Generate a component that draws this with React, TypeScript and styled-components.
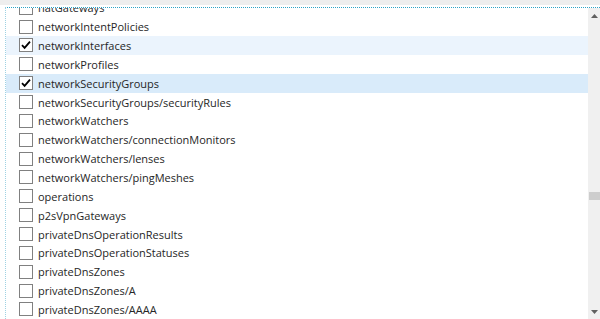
import React from 'react';
import styled, { createGlobalStyle } from 'styled-components';

// types
type Item = {
    label: string;
    checked?: boolean;
    tone?: 'hover' | 'selected';
};

const items: Item[] = [
    { label: 'natGateways' },
    { label: 'networkIntentPolicies' },
    { label: 'networkInterfaces', checked: true, tone: 'hover' },
    { label: 'networkProfiles' },
    { label: 'networkSecurityGroups', checked: true, tone: 'selected' },
    { label: 'networkSecurityGroups/securityRules' },
    { label: 'networkWatchers' },
    { label: 'networkWatchers/connectionMonitors' },
    { label: 'networkWatchers/lenses' },
    { label: 'networkWatchers/pingMeshes' },
    { label: 'operations' },
    { label: 'p2sVpnGateways' },
    { label: 'privateDnsOperationResults' },
    { label: 'privateDnsOperationStatuses' },
    { label: 'privateDnsZones' },
    { label: 'privateDnsZones/A' },
    { label: 'privateDnsZones/AAAA' }
];

const GlobalStyle = createGlobalStyle`
    html, body {
        margin: 0;
        padding: 0;
        background: #ffffff;
    }
`;

// local components
const Page = styled.div`
    width: 600px;
    height: 319px;
    display: flex;
    flex-direction: column;
    overflow: hidden;
    font-family: 'Open Sans', 'Noto Sans', sans-serif;
`;

const TopBand = styled.div`
    height: 5px;
    background: #eeeeee;
    margin-bottom: 2px;
`;

const Frame = styled.div`
    flex: 1;
    min-height: 0;
    margin-left: 5px;
    display: flex;
    border-top: 1px dotted #2ea4c7;
    border-left: 1px dotted #9fd2e3;
`;

const List = styled.div`
    flex: 1;
    min-width: 0;
    overflow: hidden;
`;

const Rows = styled.div`
    margin-top: -9.7px;
`;

const Row = styled.div<{ $tone?: 'hover' | 'selected' }>`
    height: 18.87px;
    display: flex;
    align-items: center;
    padding-left: 13px;
    gap: 5px;
    background: ${p =>
        p.$tone === 'selected' ? '#d9ebfa' : p.$tone === 'hover' ? '#ebf4fd' : 'transparent'};
`;

const Box = styled.div`
    width: 12px;
    height: 12px;
    border: 1px solid #808080;
    background: #ffffff;
    display: flex;
    align-items: center;
    justify-content: center;
    flex: none;
`;

const Label = styled.span`
    font-size: 11px;
    color: #262626;
    white-space: nowrap;
`;

const Scrollbar = styled.div`
    width: 12px;
    flex: none;
    background: #f0f0f0;
    display: flex;
    flex-direction: column;
    align-items: center;
    justify-content: space-between;
    padding: 6px 0 5px;
    box-sizing: border-box;
    position: relative;
`;

const Thumb = styled.div`
    position: absolute;
    left: 1px;
    right: 0;
    top: 184px;
    height: 8px;
    background: #cdcdcd;
`;

const Check = () => (
    <svg width="12" height="12" viewBox="0 0 12 12">
        <path d="M2 6.2 L4.6 8.9 L10 2.6" fill="none" stroke="#000" strokeWidth="1.8" />
    </svg>
);

const Arrow = ({ down }: { down?: boolean }) => (
    <svg width="7" height="4" viewBox="0 0 7 4">
        <path d={down ? 'M0 0 H7 L3.5 4 Z' : 'M0 4 H7 L3.5 0 Z'} fill="#606060" />
    </svg>
);

// export
export default () => {
    return (
        <Page>
            <GlobalStyle />
            <TopBand />
            <Frame>
                <List>
                    <Rows>
                        {items.map(item => (
                            <Row key={item.label} $tone={item.tone}>
                                <Box>{item.checked && <Check />}</Box>
                                <Label>{item.label}</Label>
                            </Row>
                        ))}
                    </Rows>
                </List>
                <Scrollbar>
                    <Arrow />
                    <Thumb />
                    <Arrow down />
                </Scrollbar>
            </Frame>
        </Page>
    );
};
